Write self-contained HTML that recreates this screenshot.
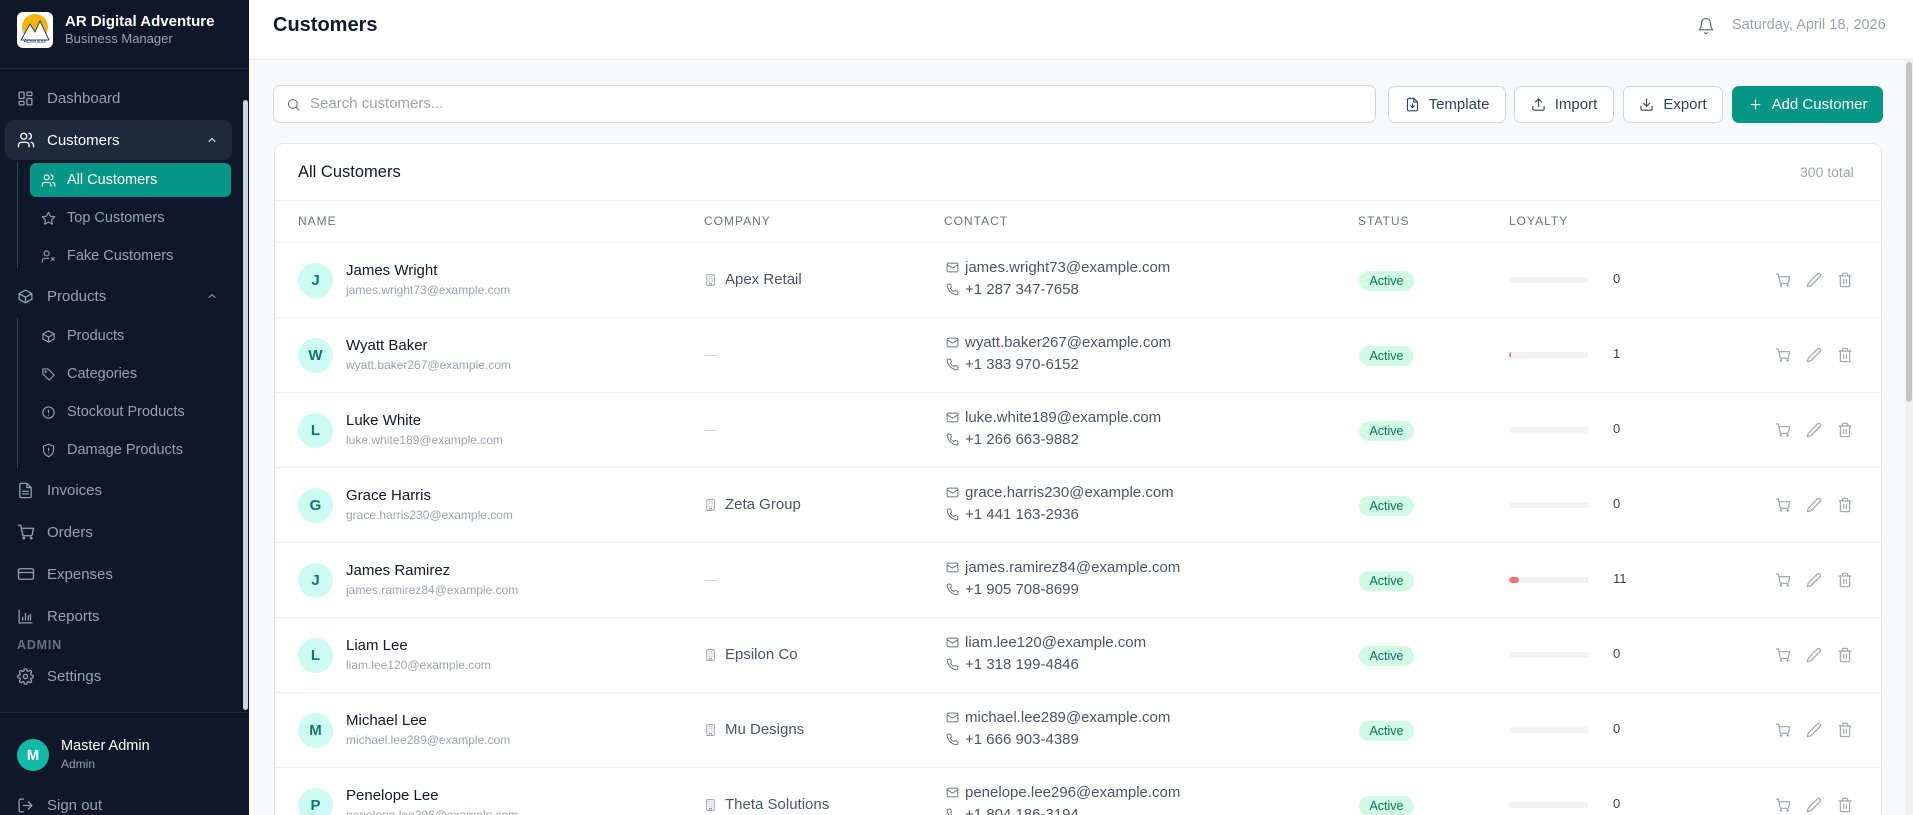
<!DOCTYPE html>
<html style="height:815px;overflow:hidden"><head><meta charset="utf-8"><style>
*{box-sizing:border-box;margin:0;padding:0}
body{width:1913px;height:815px;overflow:hidden;font-family:"Liberation Sans",sans-serif;background:#f8f9fb;position:relative;color:#111827}
.sb{position:absolute;left:0;top:0;width:249px;height:815px;background:#0f172a;color:#94a3b8}
.sb .t{position:absolute;white-space:nowrap}
.ni{position:absolute;left:0;width:249px;height:36px;display:flex;align-items:center;font-size:15px;color:#94a3b8}
.ni svg{position:absolute;left:17px}
.ni span{position:absolute;left:47px}
.si{position:absolute;left:30px;width:201px;height:34px;display:flex;align-items:center;font-size:14.5px;color:#94a3b8}
.si svg{position:absolute;left:11px}
.si span{position:absolute;left:37px}
svg{fill:none;stroke:currentColor;stroke-width:1.8;stroke-linecap:round;stroke-linejoin:round}
.main{position:absolute;left:249px;top:0;right:0;height:815px}
.hdr{position:absolute;left:0;top:0;right:0;height:60px;background:#fff;border-bottom:1px solid #e5e7eb}
.btn{position:absolute;top:86px;height:37px;border:1px solid #d1d5db;border-radius:7px;background:#fff;display:flex;align-items:center;justify-content:center;gap:9px;font-size:15px;color:#374151}
.card{position:absolute;left:274px;top:143px;width:1608px;height:700px;background:#fff;border:1px solid #e5e7eb;border-radius:10px}
.th{position:absolute;top:214px;font-size:12px;letter-spacing:1px;color:#6b7280}
.row{position:absolute;left:275px;width:1606px;height:75px;border-top:1px solid #f0f1f3}
.row>*{position:absolute}
.av{left:23px;top:20px;width:35px;height:35px;border-radius:50%;background:#ccfbf1;color:#0f766e;font-weight:bold;font-size:15px;display:flex;align-items:center;justify-content:center}
.nm{left:71px;top:19px;font-size:15px;color:#111827}
.em{left:71px;top:40px;font-size:12px;color:#9ca3af}
.co{left:429px;top:28px;font-size:15px;color:#4b5563;display:flex;align-items:center;gap:8px}
.dash{left:429px;top:37px;width:14px;height:1px;background:#d1d5db}
.c1,.c2{left:671px;font-size:15px;color:#6b7280;display:flex;align-items:center;gap:6px}
.c1{top:16px}.c2{top:38px}
.pill{left:1084px;top:28px;height:20px;width:55px;border-radius:10px;background:#d1fae5;color:#047857;font-size:12.5px;display:flex;align-items:center;justify-content:center}
.bar{left:1234px;top:34px;width:80px;height:6px;border-radius:3px;background:#f1f2f4;overflow:hidden}
.bar i{display:block;height:6px;background:#f87171;border-radius:3px}
.num{left:1338px;top:28px;font-size:13px;color:#374151}
.ic{top:29px;color:#9ca3af}
</style></head><body>
<div class="sb">
 <div style="position:absolute;left:17px;top:12px;width:36px;height:36px;background:#fff;border-radius:6px;overflow:hidden">
  <svg width="36" height="36" viewBox="0 0 36 36" style="stroke:none"><circle cx="18" cy="15" r="13" fill="#f5b50a"/><path d="M4 28 L13 12 L18 20 L23 9 L32 28Z" fill="#fff" stroke="#334155" stroke-width="1"/><text x="18" y="31" font-size="5" text-anchor="middle" fill="#1e3a8a" stroke="none" font-family="Liberation Sans">Adventure</text></svg>
 </div>
 <div class="t" style="left:65px;top:13px;font-size:15px;font-weight:bold;color:#fff">AR Digital Adventure</div>
 <div class="t" style="left:65px;top:31px;font-size:13px;color:#94a3b8">Business Manager</div>
 <div style="position:absolute;left:0;top:68px;width:249px;height:1px;background:#1e293b"></div>
 <div class="ni" style="top:80px"><svg width="17" height="17" viewBox="0 0 24 24"><rect x="3" y="3" width="7" height="9" rx="1"/><rect x="14" y="3" width="7" height="5" rx="1"/><rect x="14" y="12" width="7" height="9" rx="1"/><rect x="3" y="16" width="7" height="5" rx="1"/></svg><span>Dashboard</span></div>
 <div class="ni" style="top:120px;left:5px;width:227px;height:40px;background:#1e293b;border-radius:8px;color:#fff"><svg width="18" height="18" viewBox="0 0 24 24" style="left:12px"><circle cx="9" cy="7" r="4"/><path d="M2 21v-2a4 4 0 0 1 4-4h6a4 4 0 0 1 4 4v2M16 3.1a4 4 0 0 1 0 7.8M22 21v-2a4 4 0 0 0-3-3.9"/></svg><span style="left:42px">Customers</span><svg width="12" height="12" viewBox="0 0 24 24" style="left:201px"><path d="M6 15l6-6 6 6"/></svg></div>
 <div style="position:absolute;left:17px;top:162px;width:1px;height:106px;background:#334155"></div>
 <div class="si" style="top:163px;background:#059685;border-radius:6px;color:#fff"><svg width="15" height="15" viewBox="0 0 24 24"><circle cx="9" cy="7" r="4"/><path d="M2 21v-2a4 4 0 0 1 4-4h6a4 4 0 0 1 4 4v2M16 3.1a4 4 0 0 1 0 7.8M22 21v-2a4 4 0 0 0-3-3.9"/></svg><span>All Customers</span></div>
 <div class="si" style="top:201px"><svg width="15" height="15" viewBox="0 0 24 24"><path d="M12 2l3.1 6.3 6.9 1-5 4.9 1.2 6.8L12 17.8 5.8 21l1.2-6.8-5-4.9 6.9-1z"/></svg><span>Top Customers</span></div>
 <div class="si" style="top:239px"><svg width="15" height="15" viewBox="0 0 24 24"><circle cx="9" cy="7" r="4"/><path d="M2 21v-2a4 4 0 0 1 4-4h6M17 14l4 4M21 14l-4 4"/></svg><span>Fake Customers</span></div>
 <div class="ni" style="top:278px"><svg width="17" height="17" viewBox="0 0 24 24"><path d="M21 8l-9-5-9 5v8l9 5 9-5zM3 8l9 5 9-5M12 13v8"/></svg><span>Products</span><svg width="12" height="12" viewBox="0 0 24 24" style="left:206px"><path d="M6 15l6-6 6 6"/></svg></div>
 <div style="position:absolute;left:17px;top:318px;width:1px;height:150px;background:#334155"></div>
 <div class="si" style="top:319px"><svg width="15" height="15" viewBox="0 0 24 24"><path d="M21 8l-9-5-9 5v8l9 5 9-5zM3 8l9 5 9-5M12 13v8"/></svg><span>Products</span></div>
 <div class="si" style="top:357px"><svg width="15" height="15" viewBox="0 0 24 24"><path d="M3 3h8l10 10-8 8L3 11z"/><circle cx="7.5" cy="7.5" r="1"/></svg><span>Categories</span></div>
 <div class="si" style="top:395px"><svg width="15" height="15" viewBox="0 0 24 24"><circle cx="12" cy="12" r="9"/><path d="M12 8v4M12 16h.01"/></svg><span>Stockout Products</span></div>
 <div class="si" style="top:433px"><svg width="15" height="15" viewBox="0 0 24 24"><path d="M12 22s8-4 8-10V5l-8-3-8 3v7c0 6 8 10 8 10zM12 8v4M12 16h.01"/></svg><span>Damage Products</span></div>
 <div class="ni" style="top:472px"><svg width="17" height="17" viewBox="0 0 24 24"><path d="M14 2H6a2 2 0 0 0-2 2v16a2 2 0 0 0 2 2h12a2 2 0 0 0 2-2V8zM14 2v6h6M8 13h8M8 17h8"/></svg><span>Invoices</span></div>
 <div class="ni" style="top:514px"><svg width="18" height="18" viewBox="0 0 24 24"><circle cx="9" cy="20" r="1"/><circle cx="19" cy="20" r="1"/><path d="M2 3h3l2.6 12.4a2 2 0 0 0 2 1.6h8.7a2 2 0 0 0 2-1.6L22 7H6"/></svg><span>Orders</span></div>
 <div class="ni" style="top:556px"><svg width="18" height="18" viewBox="0 0 24 24"><rect x="2" y="5" width="20" height="14" rx="2"/><path d="M2 10h20"/></svg><span>Expenses</span></div>
 <div class="ni" style="top:598px"><svg width="17" height="17" viewBox="0 0 24 24"><path d="M3 3v18h18M8 17v-4M12 17V8M16 17v-6M19 17V9"/></svg><span>Reports</span></div>
 <div class="t" style="left:17px;top:638px;font-size:12.5px;font-weight:bold;letter-spacing:.8px;color:#64748b">ADMIN</div>
 <div class="ni" style="top:658px"><svg width="17" height="17" viewBox="0 0 24 24"><circle cx="12" cy="12" r="3"/><path d="M19.4 15a1.7 1.7 0 0 0 .3 1.8l.1.1a2 2 0 1 1-2.8 2.8l-.1-.1a1.7 1.7 0 0 0-1.8-.3 1.7 1.7 0 0 0-1 1.5V21a2 2 0 1 1-4 0v-.1a1.7 1.7 0 0 0-1.1-1.5 1.7 1.7 0 0 0-1.8.3l-.1.1a2 2 0 1 1-2.8-2.8l.1-.1a1.7 1.7 0 0 0 .3-1.8 1.7 1.7 0 0 0-1.5-1H3a2 2 0 1 1 0-4h.1a1.7 1.7 0 0 0 1.5-1.1 1.7 1.7 0 0 0-.3-1.8l-.1-.1a2 2 0 1 1 2.8-2.8l.1.1a1.7 1.7 0 0 0 1.8.3H9a1.7 1.7 0 0 0 1-1.5V3a2 2 0 1 1 4 0v.1a1.7 1.7 0 0 0 1 1.5 1.7 1.7 0 0 0 1.8-.3l.1-.1a2 2 0 1 1 2.8 2.8l-.1.1a1.7 1.7 0 0 0-.3 1.8V9a1.7 1.7 0 0 0 1.5 1H21a2 2 0 1 1 0 4h-.1a1.7 1.7 0 0 0-1.5 1z"/></svg><span>Settings</span></div>
 <div style="position:absolute;left:243px;top:100px;width:5px;height:610px;background:#cbd5e1;border-radius:3px"></div>
 <div style="position:absolute;left:0;top:712px;width:249px;height:1px;background:#1e293b"></div>
 <div style="position:absolute;left:17px;top:739px;width:32px;height:32px;border-radius:50%;background:#14b8a6;color:#fff;font-weight:bold;font-size:15px;display:flex;align-items:center;justify-content:center">M</div>
 <div class="t" style="left:61px;top:738px;font-size:14.5px;color:#fff">Master Admin</div>
 <div class="t" style="left:61px;top:757px;font-size:12px;color:#94a3b8">Admin</div>
 <div class="ni" style="top:787px"><svg width="17" height="17" viewBox="0 0 24 24"><path d="M9 21H5a2 2 0 0 1-2-2V5a2 2 0 0 1 2-2h4M16 17l5-5-5-5M21 12H9"/></svg><span>Sign out</span></div>
</div>
<div class="main">
 <div class="hdr">
  <div style="position:absolute;left:24px;top:14px;font-size:20px;font-weight:bold;color:#111827">Customers</div>
  <svg width="18" height="18" viewBox="0 0 24 24" style="position:absolute;left:1448px;top:17px;color:#6b7280"><path d="M6 8a6 6 0 0 1 12 0c0 7 3 9 3 9H3s3-2 3-9M10.3 21a1.9 1.9 0 0 0 3.4 0"/></svg>
  <div style="position:absolute;left:1483px;top:17px;font-size:14.5px;color:#9ca3af">Saturday, April 18, 2026</div>
 </div>
</div>
<div style="position:absolute;left:1905px;top:60px;width:8px;height:755px;background:#f1f1f1"></div>
<div style="position:absolute;left:1906px;top:62px;width:6px;height:340px;background:#c4c4c4;border-radius:3px"></div>
<div style="position:absolute;left:273px;top:85px;width:1103px;height:38px;background:#fff;border:1px solid #d1d5db;border-radius:7px"></div>
<svg width="15" height="15" viewBox="0 0 24 24" style="position:absolute;left:286px;top:97px;color:#6b7280"><circle cx="11" cy="11" r="7"/><path d="M21 21l-5-5"/></svg>
<div style="position:absolute;left:310px;top:95px;font-size:15px;color:#9ca3af">Search customers...</div>
<div class="btn" style="left:1388px;width:118px"><svg width="15" height="15" viewBox="0 0 24 24"><path d="M14 2H6a2 2 0 0 0-2 2v16a2 2 0 0 0 2 2h12a2 2 0 0 0 2-2V8zM14 2v6h6M12 11v6M9 14l3 3 3-3"/></svg>Template</div>
<div class="btn" style="left:1514px;width:100px"><svg width="15" height="15" viewBox="0 0 24 24"><path d="M21 15v4a2 2 0 0 1-2 2H5a2 2 0 0 1-2-2v-4M17 8l-5-5-5 5M12 3v12"/></svg>Import</div>
<div class="btn" style="left:1623px;width:100px"><svg width="15" height="15" viewBox="0 0 24 24"><path d="M21 15v4a2 2 0 0 1-2 2H5a2 2 0 0 1-2-2v-4M7 10l5 5 5-5M12 15V3"/></svg>Export</div>
<div class="btn" style="left:1732px;width:151px;background:#059685;border-color:#059685;color:#fff"><svg width="15" height="15" viewBox="0 0 24 24"><path d="M12 5v14M5 12h14"/></svg>Add Customer</div>
<div class="card"></div>
<div style="position:absolute;left:298px;top:163px;font-size:16.5px;color:#111827">All Customers</div>
<div style="position:absolute;left:1800px;top:164px;font-size:14px;color:#9ca3af">300 total</div>
<div style="position:absolute;left:275px;top:200px;width:1606px;height:1px;background:#f0f1f3"></div>
<div class="th" style="left:298px">NAME</div>
<div class="th" style="left:704px">COMPANY</div>
<div class="th" style="left:944px">CONTACT</div>
<div class="th" style="left:1358px">STATUS</div>
<div class="th" style="left:1509px">LOYALTY</div>
<div id="rows"></div>
<script>
const d=[["J","James Wright","james.wright73@example.com","Apex Retail","+1 287 347-7658",0,0],
["W","Wyatt Baker","wyatt.baker267@example.com","","+1 383 970-6152",1,2],
["L","Luke White","luke.white189@example.com","","+1 266 663-9882",0,0],
["G","Grace Harris","grace.harris230@example.com","Zeta Group","+1 441 163-2936",0,0],
["J","James Ramirez","james.ramirez84@example.com","","+1 905 708-8699",11,10],
["L","Liam Lee","liam.lee120@example.com","Epsilon Co","+1 318 199-4846",0,0],
["M","Michael Lee","michael.lee289@example.com","Mu Designs","+1 666 903-4389",0,0],
["P","Penelope Lee","penelope.lee296@example.com","Theta Solutions","+1 804 186-3194",0,0]];
const mail='<svg width="13" height="13" viewBox="0 0 24 24"><rect x="2" y="4" width="20" height="16" rx="2"/><path d="M22 7l-10 6L2 7"/></svg>';
const ph='<svg width="13" height="13" viewBox="0 0 24 24"><path d="M22 16.9v3a2 2 0 0 1-2.2 2 19.8 19.8 0 0 1-8.6-3.1 19.5 19.5 0 0 1-6-6A19.8 19.8 0 0 1 2.1 4.2 2 2 0 0 1 4.1 2h3a2 2 0 0 1 2 1.7c.1.9.4 1.9.7 2.8a2 2 0 0 1-.5 2.1L8 9.8a16 16 0 0 0 6 6l1.3-1.3a2 2 0 0 1 2.1-.4c.9.3 1.8.6 2.8.7a2 2 0 0 1 1.7 2z"/></svg>';
const bld='<svg width="13" height="14" viewBox="0 0 24 24" style="color:#9ca3af"><rect x="5" y="2" width="14" height="20" rx="1"/><path d="M9 6h1M14 6h1M9 10h1M14 10h1M9 14h1M14 14h1M10 22v-4h4v4"/></svg>';
let h='';
d.forEach((r,i)=>{h+=`<div class="row" style="top:${242+i*75}px"><div class="av">${r[0]}</div><div class="nm">${r[1]}</div><div class="em">${r[2]}</div>`+
(r[3]?`<div class="co">${bld}${r[3]}</div>`:`<div class="dash"></div>`)+
`<div class="c1" style="color:#6b7280">${mail}<span style="color:#4b5563">${r[2]}</span></div><div class="c2">${ph}<span style="color:#4b5563">${r[4]}</span></div>`+
`<div class="pill">Active</div><div class="bar"><i style="width:${r[6]}px"></i></div><div class="num">${r[5]}</div>`+
`<svg class="ic" width="16" height="16" viewBox="0 0 24 24" style="left:1500px"><circle cx="9" cy="20" r="1"/><circle cx="19" cy="20" r="1"/><path d="M2 3h3l2.6 12.4a2 2 0 0 0 2 1.6h8.7a2 2 0 0 0 2-1.6L22 7H6"/></svg>`+
`<svg class="ic" width="16" height="16" viewBox="0 0 24 24" style="left:1531px"><path d="M17 3a2.8 2.8 0 1 1 4 4L7.5 20.5 2 22l1.5-5.5z"/></svg>`+
`<svg class="ic" width="16" height="16" viewBox="0 0 24 24" style="left:1562px"><path d="M3 6h18M19 6v14a2 2 0 0 1-2 2H7a2 2 0 0 1-2-2V6M8 6V4a2 2 0 0 1 2-2h4a2 2 0 0 1 2 2v2M10 11v6M14 11v6"/></svg></div>`;});
document.getElementById('rows').innerHTML=h;
</script>
</body></html>
